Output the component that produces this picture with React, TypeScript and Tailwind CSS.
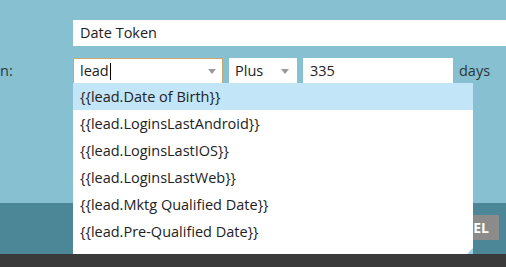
const items = [
  '{{lead.Date of Birth}}',
  '{{lead.LoginsLastAndroid}}',
  '{{lead.LoginsLastIOS}}',
  '{{lead.LoginsLastWeb}}',
  '{{lead.Mktg Qualified Date}}',
  '{{lead.Pre-Qualified Date}}',
]

function Caret() {
  return (
    <svg width="8" height="5" viewBox="0 0 8 5" className="shrink-0">
      <path d="M0 0h8L4 5z" fill="#9a9a9a" />
    </svg>
  )
}

export default function App() {
  return (
    <div className="relative h-[267px] w-[506px] overflow-hidden bg-[#87c1d1] font-['Open_Sans',sans-serif] text-[14.5px] text-[#222]">
      <div className="flex h-[203px] flex-col gap-[12px] pt-[20px]">
        <div className="flex">
          <div className="w-[73px] shrink-0" />
          <div className="flex h-[26px] flex-1 items-center bg-white px-[7px]">Date Token</div>
        </div>
        <div className="flex h-[26px] items-center gap-[6px]">
          <div className="flex w-[67px] justify-start overflow-hidden text-[#2b3539]">n:</div>
          <div className="flex h-[26px] w-[150px] items-center border border-[#c9a86e] bg-white pl-[6px] pr-[6px]">
            <span>lead</span>
            <span className="ml-[1px] h-[17px] w-[1px] bg-black" />
            <div className="flex-1" />
            <Caret />
          </div>
          <div className="flex h-[26px] w-[68px] items-center bg-white pl-[6px] pr-[8px]">
            <span className="flex-1">Plus</span>
            <Caret />
          </div>
          <div className="flex h-[26px] w-[150px] items-center bg-white px-[7px]">335</div>
          <span className="text-[#2b3539]">days</span>
        </div>
      </div>
      <div className="flex h-[51px] items-start justify-end bg-[#4b8797] pr-[7px] pt-[12px]">
        <button className="h-[25px] bg-[#8b8b8b] px-[10px] text-[14px] leading-[25px] font-bold text-white">CANCEL</button>
      </div>
      <div className="h-[13px] bg-[#3a3a3a]" />
      <div className="absolute left-[73px] top-[83px] h-[171px] w-[400px] bg-white">
        {items.map((t, i) => (
          <div
            key={t}
            className={`flex h-[27px] items-center px-[7px] ${i === 0 ? 'bg-[#c2e5f8]' : ''}`}
          >
            {t}
          </div>
        ))}
        <svg width="6" height="6" viewBox="0 0 6 6" className="absolute bottom-0 right-0">
          <path d="M6 0v6H0z" fill="#9fcfe0" />
        </svg>
      </div>
    </div>
  )
}
